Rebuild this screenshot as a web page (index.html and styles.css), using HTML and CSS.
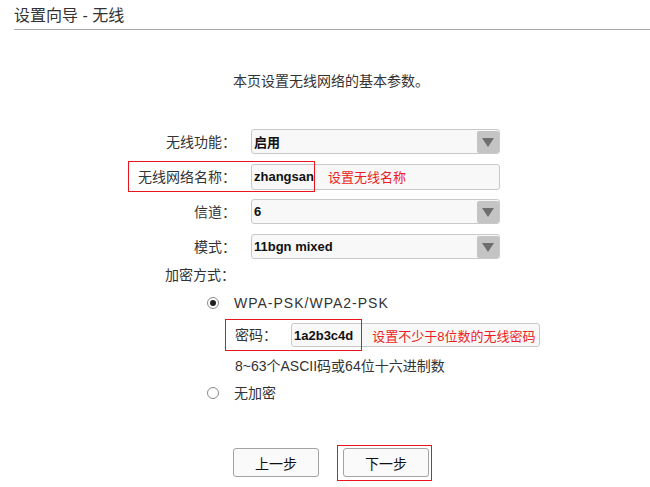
FILE: index.html
```html
<!DOCTYPE html>
<html lang="zh-CN">
<head>
<meta charset="utf-8">
<title>设置向导 - 无线</title>
<link rel="stylesheet" href="styles.css">
</head>
<body>
<div class="header"><h1 class="title">设置向导 - 无线</h1></div>
<p class="intro">本页设置无线网络的基本参数。</p>
<div class="form">
  <div class="rows">
    <div class="row">
      <span class="lbl">无线功能：</span>
      <div class="field select"><span class="val">启用</span><span class="arrow"><span class="tri"></span></span></div>
    </div>
    <div class="row marked">
      <span class="lbl">无线网络名称：</span>
      <div class="field input"><span class="val">zhangsan</span><span class="note note-ssid">设置无线名称</span></div>
      <span class="mark mark-ssid"></span>
    </div>
    <div class="row">
      <span class="lbl">信道：</span>
      <div class="field select"><span class="val">6</span><span class="arrow"><span class="tri"></span></span></div>
    </div>
    <div class="row">
      <span class="lbl">模式：</span>
      <div class="field select"><span class="val">11bgn mixed</span><span class="arrow"><span class="tri"></span></span></div>
    </div>
  </div>
  <div class="enc-label">加密方式：</div>
  <div class="enc">
    <div class="radio-row"><span class="radio on"></span><span class="radio-text wide">WPA-PSK/WPA2-PSK</span></div>
    <div class="pw-row marked">
      <span class="pw-lbl">密码：</span>
      <div class="field pw"><span class="val">1a2b3c4d</span><span class="note note-pw">设置不少于8位数的无线密码</span></div>
      <span class="mark mark-pw"></span>
    </div>
    <div class="hint">8~63个ASCII码或64位十六进制数</div>
    <div class="radio-row second"><span class="radio"></span><span class="radio-text">无加密</span></div>
  </div>
  <div class="buttons">
    <button class="btn" type="button">上一步</button>
    <div class="btn-wrap marked">
      <button class="btn" type="button">下一步</button>
      <span class="mark mark-btn"></span>
    </div>
  </div>
</div>
</body>
</html>
```
FILE: styles.css
```css
html, body {
  margin: 0;
  padding: 0;
  background: #ffffff;
}
body {
  font-family: "Liberation Sans", "Noto Sans CJK SC", sans-serif;
  color: #333333;
  width: 650px;
  height: 487px;
  overflow: hidden;
}
.header {
  margin-left: 14px;
  padding-top: 6px;
  padding-bottom: 3px;
  border-bottom: 1px solid #a8a8a8;
}
.title {
  margin: 0;
  font-size: 16px;
  line-height: 20px;
  font-weight: normal;
  color: #333333;
}
.intro {
  margin: 41px 0 0 0;
  padding-left: 233px;
  font-size: 14px;
  line-height: 20px;
  color: #333333;
}
.form {
  margin-top: 38px;
  padding-left: 120px;
}
.rows {
  display: flex;
  flex-direction: column;
  gap: 10px;
}
.row {
  display: flex;
  align-items: center;
  height: 25px;
}
.marked {
  position: relative;
}
.lbl {
  width: 116px;
  text-align: right;
  font-size: 14px;
  line-height: 20px;
  color: #333333;
  white-space: nowrap;
}
.field {
  box-sizing: border-box;
  width: 249px;
  height: 25px;
  margin-left: 15px;
  border: 1px solid #c9c9c9;
  border-radius: 3px;
  background: #f8f8f8;
  display: flex;
  align-items: center;
}
.val {
  padding-left: 2px;
  font-size: 13px;
  font-weight: bold;
  color: #111111;
  white-space: nowrap;
}
.select {
  justify-content: space-between;
}
.arrow {
  width: 22px;
  height: 22px;
  border-radius: 2px;
  background: #c4c4c4;
  display: flex;
  align-items: center;
  justify-content: center;
}
.tri {
  width: 0;
  height: 0;
  border-left: 6px solid transparent;
  border-right: 6px solid transparent;
  border-top: 9px solid #6e6e6e;
  margin-top: 1px;
}
.input {
  height: 26px;
}
.note {
  font-size: 13px;
  color: #ec1c24;
  white-space: nowrap;
}
.note-ssid {
  margin-left: 14px;
}
.mark {
  position: absolute;
  box-sizing: border-box;
  border: 1px solid #e8141e;
  pointer-events: none;
}
.mark-ssid {
  left: 8px;
  top: -3px;
  width: 187px;
  height: 31px;
}
.enc-label {
  margin-top: 6px;
  padding-left: 45px;
  font-size: 14px;
  line-height: 20px;
  color: #333333;
}
.enc {
  padding-left: 87px;
}
.radio-row {
  display: flex;
  align-items: center;
  height: 20px;
  margin-top: 8px;
}
.radio-row.second {
  margin-top: 7px;
}
.radio {
  box-sizing: border-box;
  width: 12px;
  height: 12px;
  border: 1px solid #8a8a8a;
  border-radius: 50%;
  background: #ffffff;
  display: flex;
  align-items: center;
  justify-content: center;
}
.radio.on::after {
  content: "";
  width: 6px;
  height: 6px;
  border-radius: 50%;
  background: #222222;
}
.radio-text {
  margin-left: 15px;
  font-size: 14px;
  line-height: 20px;
  color: #333333;
}
.radio-text.wide {
  letter-spacing: 1px;
}
.pw-row {
  display: flex;
  align-items: center;
  height: 24px;
  margin-top: 10px;
  margin-left: 28px;
}
.pw-lbl {
  width: 56px;
  font-size: 14px;
  line-height: 20px;
  color: #333333;
}
.pw {
  margin-left: 0;
  height: 24px;
}
.note-pw {
  margin-left: 19px;
}
.mark-pw {
  left: -10px;
  top: -4px;
  width: 137px;
  height: 32px;
}
.hint {
  margin-top: 9px;
  margin-left: 28px;
  font-size: 14px;
  line-height: 20px;
  color: #333333;
}
.buttons {
  display: flex;
  gap: 24px;
  margin-top: 45px;
  padding-left: 113px;
}
.btn-wrap {
  display: flex;
}
.btn {
  box-sizing: border-box;
  width: 86px;
  height: 29px;
  margin: 0;
  padding: 0;
  border: 1px solid #a3a3a3;
  border-radius: 3px;
  background: #fafafa;
  font-family: "Liberation Sans", "Noto Sans CJK SC", sans-serif;
  font-size: 14px;
  color: #111111;
}
.mark-btn {
  left: -6px;
  top: -3px;
  width: 95px;
  height: 36px;
}
```
